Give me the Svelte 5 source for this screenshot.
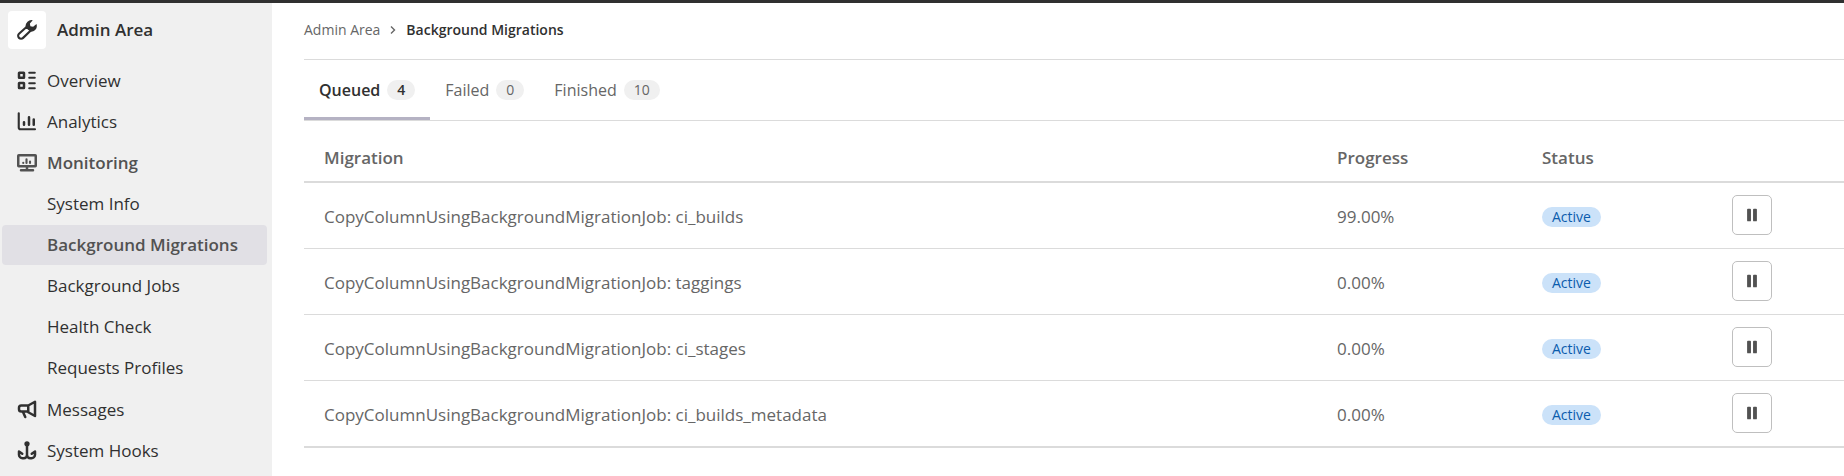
<script lang="ts">
  interface NavItem {
    label: string;
    icon: string;
    active?: boolean;
    children?: { label: string; active?: boolean }[];
  }

  interface Migration {
    id: number;
    name: string;
    progress: string;
    status: string;
  }

  const navItems: NavItem[] = [
    { label: 'Overview', icon: 'overview' },
    { label: 'Analytics', icon: 'chart' },
    {
      label: 'Monitoring',
      icon: 'monitor',
      active: true,
      children: [
        { label: 'System Info' },
        { label: 'Background Migrations', active: true },
        { label: 'Background Jobs' },
        { label: 'Health Check' },
        { label: 'Requests Profiles' },
      ],
    },
    { label: 'Messages', icon: 'messages' },
    { label: 'System Hooks', icon: 'hook' },
  ];

  const tabs = [
    { id: 'queued', label: 'Queued', count: 4 },
    { id: 'failed', label: 'Failed', count: 0 },
    { id: 'finished', label: 'Finished', count: 10 },
  ];

  const migrations: Migration[] = [
    { id: 1, name: 'CopyColumnUsingBackgroundMigrationJob: ci_builds', progress: '99.00%', status: 'Active' },
    { id: 2, name: 'CopyColumnUsingBackgroundMigrationJob: taggings', progress: '0.00%', status: 'Active' },
    { id: 3, name: 'CopyColumnUsingBackgroundMigrationJob: ci_stages', progress: '0.00%', status: 'Active' },
    { id: 4, name: 'CopyColumnUsingBackgroundMigrationJob: ci_builds_metadata', progress: '0.00%', status: 'Active' },
  ];

  let currentTab = $state('queued');
</script>

{#snippet icon(name: string)}
  <svg class="icon" viewBox="0 0 16 16" aria-hidden="true">
    {#if name === 'overview'}
      <rect x="1.6" y="1.4" width="4" height="4" rx="0.2" />
      <rect x="1.6" y="9.6" width="4" height="4" rx="0.2" />
      <path class="thin" d="M9.8 1.4h4.4M9.8 5.4h4.4M9.8 9.8h4.4M9.8 13.8h4.4" />
    {:else if name === 'chart'}
      <path class="thin" d="M1.4 1v11.4a1.4 1.4 0 0 0 1.4 1.4h11.6" />
      <path d="M5.6 8.2v2M9.6 4.2v6M13.4 6v4.2" />
    {:else if name === 'monitor'}
      <rect x="1" y="1.8" width="14" height="8.8" rx="0.4" />
      <path d="M8 11v2.6M3.2 13.8h9.6" />
      <path class="thin" d="M5 7.8v.2M7.6 5v3M10.4 6.8v1.2" />
    {:else if name === 'messages'}
      <path d="M9 4.4L14.4 1.4v11.4L9 9.8zM9 4.4H3.4A1.8 1.8 0 0 0 1.6 6.2v1.2a1.8 1.8 0 0 0 1.8 1.8H9M4.8 9.6l1.8 4" />
    {:else if name === 'hook'}
      <circle class="solid" cx="8" cy="2.2" r="2.1" />
      <path d="M8 3v8.2a2.6 2.6 0 0 1-2.6 2.6h-1a2.8 2.8 0 0 1-2.8-2.8V8.4l2.6 1.8M8 11.2a2.6 2.6 0 0 0 2.6 2.6h1a2.8 2.8 0 0 0 2.8-2.8V8.4l-2.6 1.8" />
    {:else if name === 'admin'}
      <path class="thin" d="M7.6 5.6L1.6 11a2.3 2.3 0 0 0 3.3 3.3L11 8.4z" />
      <path class="solid" d="M12.6.2a4.7 4.7 0 0 0-5.7 5.2l1 1.2 1.6 1.6 1.2 1.2a4.7 4.7 0 0 0 4.9-6.2l-2.7 2.2-2.2-.4-.4-2.2z" />
    {:else if name === 'pause'}
      <rect class="solid" x="2.4" y="0.8" width="4.4" height="14.4" rx="1" />
      <rect class="solid" x="9.2" y="0.8" width="4.4" height="14.4" rx="1" />
    {/if}
  </svg>
{/snippet}

<div class="topbar"></div>
<div class="layout">
  <aside class="sidebar">
    <a class="context" href="#admin">
      <span class="avatar">{@render icon('admin')}</span>
      <span>Admin Area</span>
    </a>
    <nav aria-label="Admin navigation">
      <ul class="nav-list">
        {#each navItems as item (item.label)}
          <li>
            <a class="nav-link" class:current={item.active} href="#{item.icon}">
              {@render icon(item.icon)}
              <span>{item.label}</span>
            </a>
            {#if item.children}
              <ul class="nav-list sub">
                {#each item.children as child (child.label)}
                  <li>
                    <a class="nav-link" class:current={child.active} class:selected={child.active} href="#{item.icon}">{child.label}</a>
                  </li>
                {/each}
              </ul>
            {/if}
          </li>
        {/each}
      </ul>
    </nav>
  </aside>

  <main class="content">
    <nav class="breadcrumbs" aria-label="Breadcrumbs">
      <a href="#admin">Admin Area</a>
      <svg class="chevron" viewBox="0 0 10 10" aria-hidden="true"><path d="M3 1.5L6.5 5L3 8.5" /></svg>
      <a class="here" href="#migrations">Background Migrations</a>
    </nav>

    <div class="tabs" role="tablist">
      {#each tabs as tab (tab.id)}
        <button
          class="tab"
          class:active={currentTab === tab.id}
          role="tab"
          aria-selected={currentTab === tab.id}
          onclick={() => (currentTab = tab.id)}
        >
          {tab.label}
          <span class="count">{tab.count}</span>
        </button>
      {/each}
    </div>

    <table>
      <colgroup>
        <col />
        <col class="col-progress" />
        <col class="col-status" />
        <col class="col-action" />
      </colgroup>
      <thead>
        <tr>
          <th>Migration</th>
          <th>Progress</th>
          <th>Status</th>
          <th></th>
        </tr>
      </thead>
      <tbody>
        {#each migrations as migration (migration.id)}
          <tr>
            <td>{migration.name}</td>
            <td>{migration.progress}</td>
            <td><span class="badge">{migration.status}</span></td>
            <td class="action"><button class="pause" aria-label="Pause">{@render icon('pause')}</button></td>
          </tr>
        {/each}
      </tbody>
    </table>
  </main>
</div>

<style>
  :global(body) {
    background: #fff;
    color: #303030;
    font-family: 'Segoe UI', 'Open Sans', 'Noto Sans', sans-serif;
    font-size: 17px;
    line-height: 24px;
  }

  a {
    color: inherit;
    text-decoration: none;
  }

  button {
    font: inherit;
    color: inherit;
    background: none;
    border: 0;
    cursor: pointer;
  }

  .topbar {
    height: 3px;
    background: #303030;
  }

  .layout {
    display: flex;
    min-height: calc(100vh - 3px);
  }

  .icon {
    width: 20px;
    height: 20px;
    flex-shrink: 0;
    fill: none;
    stroke: currentColor;
    stroke-width: 2;
    stroke-linecap: round;
    stroke-linejoin: round;
  }

  .icon .thin {
    stroke-width: 1.7;
  }

  .icon .solid {
    fill: currentColor;
    stroke: none;
  }

  .sidebar {
    width: 272px;
    flex-shrink: 0;
    background: #f0f0f0;
  }

  .context {
    display: flex;
    align-items: center;
    gap: 11px;
    padding: 8px;
    font-weight: 600;
  }

  .avatar {
    width: 38px;
    height: 38px;
    display: flex;
    align-items: center;
    justify-content: center;
    background: #fff;
    border-radius: 4px;
  }

  .nav-list {
    display: flex;
    flex-direction: column;
    gap: 1px;
    margin: 0;
    padding: 0;
    list-style: none;
  }

  nav > .nav-list {
    padding: 4px 5px 0 2px;
  }

  .nav-list.sub {
    padding: 1px 0;
  }

  .nav-link {
    display: flex;
    align-items: center;
    gap: 10px;
    height: 40px;
    padding: 0 15px;
    border-radius: 4px;
  }

  .sub .nav-link {
    padding-left: 45px;
  }

  .nav-link.current {
    color: #525252;
    font-weight: 600;
  }

  .nav-link.selected {
    background: #e1e0e5;
  }

  .content {
    flex: 1;
    min-width: 0;
    padding-left: 32px;
  }

  .breadcrumbs {
    display: flex;
    align-items: center;
    height: 54px;
    padding-bottom: 2px;
    border-bottom: 1px solid #dbdbdb;
    color: #666;
    font-size: 14px;
  }

  .breadcrumbs .here {
    color: #303030;
    font-weight: 600;
  }

  .chevron {
    width: 10px;
    height: 10px;
    margin: 0 8px;
    fill: none;
    stroke: #666;
    stroke-width: 1.4;
  }

  .tabs {
    display: flex;
    border-bottom: 1px solid #dbdbdb;
    color: #666;
    font-size: 16px;
  }

  .tab {
    display: flex;
    align-items: center;
    gap: 7px;
    height: 60px;
    padding: 0 15px;
  }

  .tab.active {
    color: #303030;
    font-weight: 600;
    box-shadow: inset 0 -3px #b5b2c3;
  }

  .count,
  .badge {
    padding: 0 10px;
    border-radius: 10px;
    font-size: 14px;
    line-height: 20px;
  }

  .count {
    background: #f0f0f0;
  }

  .badge {
    display: block;
    width: fit-content;
    background: #cbe2f9;
    color: #0b5cad;
  }

  table {
    width: 100%;
    table-layout: fixed;
    border-collapse: separate;
    border-spacing: 0;
    border-bottom: 1px solid #dbdbdb;
    color: #666;
  }

  .col-progress {
    width: 205px;
  }

  .col-status {
    width: 190px;
  }

  .col-action {
    width: 132px;
  }

  th {
    padding: 25px 20px 11px;
    border-bottom: 2px solid #dbdbdb;
    font-weight: 600;
    text-align: left;
  }

  td {
    padding: 14px 20px 11px;
    border-bottom: 1px solid #dbdbdb;
    vertical-align: middle;
  }

  td.action {
    padding: 12px 20px 13px;
  }

  .pause {
    display: flex;
    align-items: center;
    justify-content: center;
    width: 40px;
    height: 40px;
    padding: 0;
    border: 1px solid #bfbfbf;
    border-radius: 5px;
    color: #525252;
  }

  .pause .icon {
    width: 14px;
    height: 14px;
  }
</style>
